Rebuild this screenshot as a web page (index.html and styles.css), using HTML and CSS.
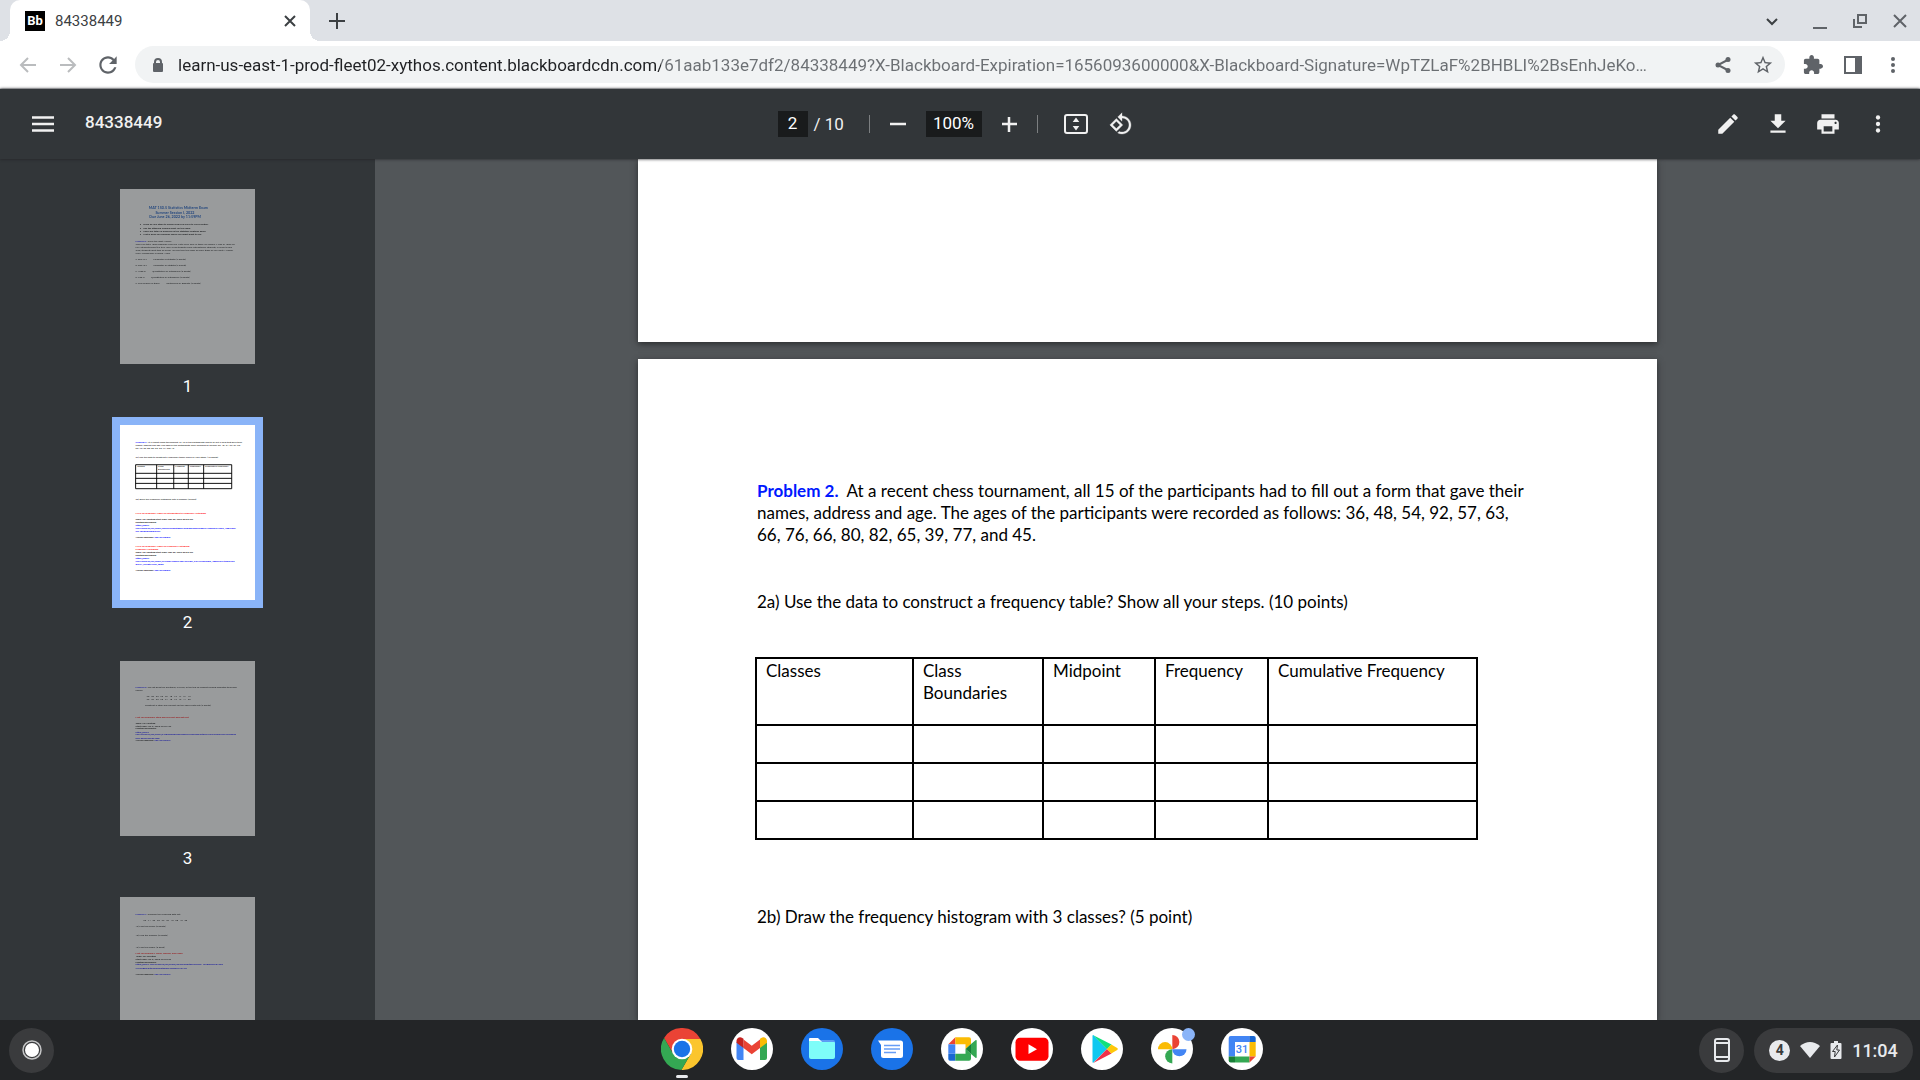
FILE: index.html
```
<!DOCTYPE html>
<html lang="en">
<head>
    <meta charset="UTF-8">
    <meta name="viewport" content="width=device-width, initial-scale=1.0">
    <title>84338449</title>
    <link rel="stylesheet" href="styles.css">
</head>
<body>
    <!-- Tab strip -->
    <div class="tabstrip">
        <div class="tab">
            <span class="favicon">Bb</span>
            <span class="tab-title">84338449</span>
            <button class="tab-close" aria-label="Close tab"><svg width="20" height="20" viewBox="0 0 20 20"><path d="M5 5l10 10M15 5L5 15" stroke="#3c4043" stroke-width="2"/></svg></button>
        </div>
        <button class="new-tab" aria-label="New tab"><svg width="20" height="20" viewBox="0 0 20 20"><path d="M10 2v16M2 10h16" stroke="#3c4043" stroke-width="2"/></svg></button>
        <div class="window-buttons">
            <button aria-label="Search tabs"><svg width="20" height="20" viewBox="0 0 20 20"><path d="M5 8l5 5 5-5" fill="none" stroke="#3c4043" stroke-width="2"/></svg></button>
            <button aria-label="Minimize"><svg width="20" height="20" viewBox="0 0 20 20"><path d="M3 17h14" stroke="#5f6368" stroke-width="2"/></svg></button>
            <button aria-label="Restore"><svg width="20" height="20" viewBox="0 0 20 20"><path d="M8 4h8v8H8zM4 8v8h8" fill="none" stroke="#5f6368" stroke-width="2"/></svg></button>
            <button aria-label="Close window"><svg width="20" height="20" viewBox="0 0 20 20"><path d="M4 4l12 12M16 4L4 16" stroke="#5f6368" stroke-width="2"/></svg></button>
        </div>
    </div>

    <!-- Address bar -->
    <div class="navbar">
        <button class="nav-button" aria-label="Back"><svg width="20" height="20" viewBox="0 0 20 20"><path d="M18 10H3M10 3l-7 7 7 7" fill="none" stroke="#babcbe" stroke-width="2"/></svg></button>
        <button class="nav-button" aria-label="Forward"><svg width="20" height="20" viewBox="0 0 20 20"><path d="M2 10h15M10 3l7 7-7 7" fill="none" stroke="#babcbe" stroke-width="2"/></svg></button>
        <button class="nav-button" aria-label="Reload"><svg width="26" height="26" viewBox="0 0 24 24"><path fill="#5f6368" d="M17.65 6.35C16.2 4.9 14.21 4 12 4c-4.42 0-7.99 3.58-7.99 8s3.57 8 7.99 8c3.73 0 6.84-2.55 7.73-6h-2.08c-.82 2.33-3.04 4-5.65 4-3.31 0-6-2.69-6-6s2.69-6 6-6c1.66 0 3.14.69 4.22 1.78L13 11h7V4l-2.35 2.35z"/></svg></button>
        <div class="omnibox">
            <svg width="16" height="16" viewBox="0 0 16 16"><path d="M5 7V5a3 3 0 0 1 6 0v2" fill="none" stroke="#5f6368" stroke-width="2"/><rect x="3" y="6" width="10" height="9" rx="1" fill="#5f6368"/></svg>
            <input class="url" type="text" aria-label="Address" value="learn-us-east-1-prod-fleet02-xythos.content.blackboardcdn.com/61aab133e7df2/84338449?X-Blackboard-Expiration=1656093600000&amp;X-Blackboard-Signature=WpTZLaF%2BHBLI%2BsEnhJeKo…">
            <button class="nav-button" aria-label="Share"><svg width="20" height="20" viewBox="0 0 20 20"><path d="M15.500 4.500L5 10l10.500 5.500" fill="none" stroke="#5f6368" stroke-width="2"/><circle cx="15" cy="4.500" r="2.500" fill="#5f6368"/><circle cx="5" cy="10" r="2.500" fill="#5f6368"/><circle cx="15" cy="15.500" r="2.500" fill="#5f6368"/></svg></button>
            <button class="nav-button" aria-label="Bookmark"><svg width="22" height="22" viewBox="0 0 24 24"><path fill="#5f6368" d="M22 9.240l-7.190-.62L12 2 9.190 8.630 2 9.240l5.460 4.730L5.820 21 12 17.270 18.180 21l-1.630-7.030L22 9.240zM12 15.400l-3.760 2.270 1-4.280-3.320-2.880 4.380-.38L12 6.100l1.710 4.040 4.380.38-3.320 2.880 1 4.280L12 15.400z"/></svg></button>
        </div>
        <button class="nav-button" aria-label="Extensions"><svg width="20" height="20" viewBox="1 1 22 22"><path fill="#5f6368" d="M20.500 11H19V7c0-1.100-.9-2-2-2h-4V3.500C13 2.120 11.880 1 10.500 1S8 2.120 8 3.500V5H4c-1.100 0-1.990.9-1.990 2v3.800H3.500c1.490 0 2.700 1.210 2.700 2.700s-1.210 2.700-2.700 2.700H2V20c0 1.100.9 2 2 2h3.800v-1.500c0-1.490 1.210-2.700 2.700-2.700 1.490 0 2.700 1.210 2.700 2.700V22H17c1.100 0 2-.9 2-2v-4h1.500c1.380 0 2.500-1.120 2.500-2.500S21.880 11 20.500 11z"/></svg></button>
        <button class="nav-button" aria-label="Side panel"><svg width="18" height="18" viewBox="0 0 18 18"><path fill="#5f6368" fill-rule="evenodd" d="M0 0h18v18H0zM2 2v14h9V2z"/></svg></button>
        <button class="nav-button" aria-label="Browser menu"><svg width="20" height="20" viewBox="0 0 20 20" fill="#5f6368"><circle cx="10" cy="4" r="2"/><circle cx="10" cy="10" r="2"/><circle cx="10" cy="16" r="2"/></svg></button>
    </div>

    <!-- PDF toolbar -->
    <div class="pdf-toolbar">
        <div class="toolbar-start">
            <button class="pdf-button" aria-label="Toggle sidebar"><svg width="22" height="16" viewBox="0 0 22 16"><path d="M0 1.500h22M0 8h22M0 14.500h22" stroke="#f1f1f1" stroke-width="2.500"/></svg></button>
            <span class="doc-name">84338449</span>
        </div>
        <div class="toolbar-center">
            <input class="field page-field" type="text" aria-label="Page number" value="2">
            <span class="page-count">/ 10</span>
            <span class="divider"></span>
            <button class="pdf-button" aria-label="Zoom out"><svg width="18" height="18" viewBox="0 0 18 18"><path d="M1 9h16" stroke="#f1f1f1" stroke-width="2.500"/></svg></button>
            <input class="field zoom-field" type="text" aria-label="Zoom level" value="100%">
            <button class="pdf-button" aria-label="Zoom in"><svg width="18" height="18" viewBox="0 0 18 18"><path d="M2 9h15M9 2v15" stroke="#f1f1f1" stroke-width="2.500"/></svg></button>
            <span class="divider"></span>
            <button class="pdf-button fit" aria-label="Fit to page"><svg width="24" height="20" viewBox="0 0 24 20"><rect x="1" y="1" width="22" height="18" rx="2" fill="none" stroke="#f1f1f1" stroke-width="2"/><path d="M12 3.500l3.300 4.500H8.700zM12 16.500l3.300-4.500H8.700z" fill="#f1f1f1"/></svg></button>
            <button class="pdf-button" aria-label="Rotate"><svg width="24" height="24" viewBox="0 0 24 24"><path fill="#f1f1f1" stroke="#f1f1f1" stroke-width=".3" d="M7.340 6.410L.86 12.900l6.490 6.480 6.490-6.480-6.500-6.490zM3.690 12.900l3.660-3.660L11 12.900l-3.660 3.660-3.650-3.660zm15.670-6.260C17.610 4.880 15.300 4 13 4V.76L8.760 5 13 9.240V6c1.790 0 3.580.68 4.950 2.050 2.730 2.730 2.730 7.170 0 9.900C16.580 19.320 14.790 20 13 20c-.97 0-1.940-.21-2.840-.61l-1.490 1.490C10.020 21.620 11.510 22 13 22c2.300 0 4.610-.88 6.360-2.640 3.520-3.510 3.520-9.210 0-12.720z"/></svg></button>
        </div>
        <div class="toolbar-end">
            <button class="pdf-button" aria-label="Annotate"><svg width="26" height="26" viewBox="0 0 24 24"><path fill="#f1f1f1" d="M3 17.250V21h3.750L17.810 9.940l-3.750-3.750L3 17.250zM20.710 7.040c.39-.39.39-1.020 0-1.410l-2.340-2.340c-.39-.39-1.020-.39-1.410 0l-1.830 1.830 3.750 3.750 1.830-1.830z"/></svg></button>
            <button class="pdf-button" aria-label="Download"><svg width="26" height="26" viewBox="0 0 24 24"><path fill="#f1f1f1" d="M19 9h-4V3H9v6H5l7 7 7-7zM5 18v2h14v-2H5z"/></svg></button>
            <button class="pdf-button" aria-label="Print"><svg width="26" height="26" viewBox="0 0 24 24"><path fill="#f1f1f1" d="M19 8H5c-1.660 0-3 1.340-3 3v6h4v4h12v-4h4v-6c0-1.660-1.340-3-3-3zm-3 11H8v-5h8v5zm3-7c-.55 0-1-.45-1-1s.45-1 1-1 1 .45 1 1-.45 1-1 1zm-1-9H6v4h12V3z"/></svg></button>
            <button class="pdf-button" aria-label="More actions"><svg width="26" height="26" viewBox="0 0 24 24" fill="#f1f1f1"><circle cx="12" cy="6" r="2"/><circle cx="12" cy="12" r="2"/><circle cx="12" cy="18" r="2"/></svg></button>
        </div>
    </div>

    <div class="main">
        <!-- Thumbnails -->
        <div class="sidebar">
            <div class="thumb">
                <svg class="thumb-page" viewBox="0 0 1020 1322">
                    <g class="thumb-title">
                        <text x="441" y="150">MAT 150.5 Statistics Midterm Exam</text>
                        <text x="415" y="188">Summer Session I, 2022</text>
                        <text x="417" y="218">Due June 26, 2022 by 11:59PM</text>
                    </g>
                    <g class="bold">
                        <text x="150" y="273">•</text><text x="176" y="273">Show all your steps to explain how you arrive to your solution.</text>
                        <text x="150" y="303">•</text><text x="176" y="303">Use the attached formula sheet for the exam.</text>
                        <text x="150" y="326">•</text><text x="176" y="326">There are total 10 problems in the Statistics Midterm Exam.</text>
                        <text x="150" y="349">•</text><text x="176" y="349">Hint is given for problems which you might want to use.</text>
                    </g>
                    <text x="118" y="399"><tspan class="blue bold">Problem 1.</tspan> Circle the right Answer.</text>
                    <text x="118" y="422">There are total 1500 problems in BMCC Math Club. 60% of these are female. Mean of 1500 are</text>
                    <text x="118" y="444">Full. Students doesn’t is true. 30% of 50 students were international students, in order to join</text>
                    <text x="118" y="469">Club, students must take an exam. You can take the exam as many times as you want. Number</text>
                    <text x="118" y="492">every Wednesday in Room N700.</text>
                    <text x="118" y="537">a. 60% is a _____ Parameter or Statistic (2 points)</text>
                    <text x="118" y="583">b. 30% is a _____ Parameter or Statistic (2 points)</text>
                    <text x="118" y="628">c. 1500 is _____ Quantitative or Categorical (2 points)</text>
                    <text x="118" y="674">d. 700 is _____ Quantitative or Categorical (2 points)</text>
                    <text x="118" y="719">e. The number of times _____ Continuous or Discrete (2 points)</text>
                </svg>
                <span class="thumb-label">1</span>
            </div>
            <div class="thumb selected">
                <svg class="thumb-page" viewBox="0 0 1020 1322">
                    <text x="118" y="134"><tspan class="blue bold">Problem 2.</tspan>  At a recent chess tournament, all 15 of the participants had to fill out a form that gave their</text>
                    <text x="118" y="157">names, address and age. The ages of the participants were recorded as follows: 36, 48, 54, 92, 57, 63,</text>
                    <text x="118" y="182">66, 76, 66, 80, 82, 65, 39, 77, and 45.</text>
                    <text x="118" y="250">2a) Use the data to construct a frequency table? Show all your steps. (10 points)</text>
                    <path d="M118 300h726v181H118zM277 300v181M406 300v181M516 300v181M632 300v181M118 365h726M118 403h726M118 441h726" fill="none" stroke="#000" stroke-width="7"/>
                    <text x="130" y="319">Classes</text>
                    <text x="288" y="319">Class</text>
                    <text x="288" y="341">Boundaries</text>
                    <text x="417" y="319">Midpoint</text>
                    <text x="527" y="319">Frequency</text>
                    <text x="643" y="319">Cumulative Frequency</text>
                    <text x="118" y="565">2b) Draw the frequency histogram with 3 classes? (5 point)</text>
                    <text class="red bold" x="118" y="673">HINT for problem2: Video on Introduction to Frequency Histogram</text>
                    <g class="bold">
                        <text x="118" y="716">Topic: My Meeting Start Time: Mar 30, 2022 09:53 PM</text>
                        <text x="118" y="741">Meeting Recording:</text>
                        <text class="blue" x="118" y="764">https://bmcc-</text>
                        <text class="blue" x="118" y="787">cuny.zoom.us/rec/share/QR7TfO2B5btwpvFOUDwsFszbeIrngq2I7AQ8TsQZHvqx2_Vq8W6kP</text>
                        <text class="blue" x="118" y="810">hkj.4dTBewxnDwQvuV</text>
                        <text x="118" y="852">Access Passcode: <tspan class="blue">ewN37Wwwo!</tspan></text>
                        <text class="red" x="118" y="923">HINT for problem2: Video on Frequency Histogram</text>
                        <text class="red" x="118" y="946">Frequency Histogram</text>
                        <text x="118" y="968">Topic: My Meeting Start Time: Mar 30, 2022 09:53 PM</text>
                        <text x="118" y="991">Meeting Recording:</text>
                        <text class="blue" x="118" y="1014">https://bmcc-</text>
                        <text class="blue" x="118" y="1036">cuny.zoom.us/rec/share/oyWbmHXqgMHaRV2sCFBE_zYqAWS5hsrwD_7RDkvO5VtTRIEWzs</text>
                        <text class="blue" x="118" y="1059">woVN_xC2wtVWz5_iwRSI</text>
                        <text x="118" y="1104">Access Passcode: <tspan class="blue">ewN37Wwwo!</tspan></text>
                    </g>
                </svg>
                <span class="thumb-label">2</span>
            </div>
            <div class="thumb">
                <svg class="thumb-page" viewBox="0 0 1020 1322">
                    <text x="118" y="205"><tspan class="blue bold">Problem 3.</tspan> The list gives the durations, in years, of the top 20 longest running animated television</text>
                    <text x="118" y="228">shows:</text>
                    <text class="numbers" x="201" y="270">20   33   23   26   22   18   15   17   24   19</text>
                    <text class="numbers" x="201" y="293">25   25   23   23   24   18   16   19   14   20</text>
                    <text x="189" y="341">Construct a stem and leaf plot for the above data set? (5 points)</text>
                    <text class="red bold" x="118" y="432">Hint for problem3: Stem and Leaf plot and dot plot</text>
                    <g class="bold">
                        <text x="118" y="477">Topic: My Meeting</text>
                        <text x="118" y="497">Start Time: Apr 5, 2022 12:43 AM</text>
                        <text x="118" y="515">Meeting Recording:</text>
                        <text class="blue" x="118" y="545">https://bmcc-</text>
                        <text class="blue" x="118" y="560">cuny.zoom.us/rec/share/iFOBDBzM8sCxTbvpTqJvlz2s5GRB3KtzGj5VQruOGpIxUM6yvSpxBTo</text>
                        <text class="blue" x="118" y="588">duvr.8zpSLOSpwNBBjl</text>
                        <text x="118" y="606">Access Passcode: <tspan class="blue">ewN37Wwwo!</tspan></text>
                    </g>
                </svg>
                <span class="thumb-label">3</span>
            </div>
            <div class="thumb">
                <svg class="thumb-page" viewBox="0 0 1020 1322">
                    <text x="118" y="134"><tspan class="blue bold">Problem 4.</tspan> Consider the following data set:</text>
                    <text class="numbers" x="176" y="182">20   74   32   35   22   25   40   38   43   33</text>
                    <text x="118" y="228">4a) Find the mean? (5 points)</text>
                    <text x="118" y="296">4b) Find the median? (5 points)</text>
                    <text x="118" y="386">4c) Find the mode? (5 point)</text>
                    <g class="bold">
                        <text class="red" x="118" y="432">Hint for problem4: Mean, Median, and Mode</text>
                        <text x="122" y="452">Topic: My Meeting</text>
                        <text x="118" y="477">Start Time: Apr 5, 2022 12:43 PM</text>
                        <text x="118" y="500">Meeting Recording:</text>
                        <text class="blue" x="118" y="515">https://bmcc-cuny.zoom.us/rec/share/ZBOMQBErtgsvOTxT3P_JeCBfdiMpygAkDe</text>
                        <text class="blue" x="118" y="545">WGCd8qxcwtwOBB5ZwtdBExrCwwKoZHxAFO</text>
                        <text x="118" y="590">Access Passcode: <tspan class="blue">ewN37Wwwo!</tspan></text>
                    </g>
                </svg>
            </div>
        </div>

        <!-- Document -->
        <div class="viewer">
            <div class="page page-end"></div>
            <div class="page">
                <p class="problem"><b>Problem 2.</b>&nbsp; At a recent chess tournament, all 15 of the participants had to fill out a form that gave their<br>names, address and age. The ages of the participants were recorded as follows: 36, 48, 54, 92, 57, 63,<br>66, 76, 66, 80, 82, 65, 39, 77, and 45.</p>
                <p>2a) Use the data to construct a frequency table? Show all your steps. (10 points)</p>
                <table>
                    <colgroup><col class="col-classes"><col class="col-bounds"><col class="col-mid"><col class="col-freq"><col class="col-cumul"></colgroup>
                    <thead>
                        <tr><th>Classes</th><th>Class<br>Boundaries</th><th>Midpoint</th><th>Frequency</th><th>Cumulative Frequency</th></tr>
                    </thead>
                    <tbody>
                        <tr><td></td><td></td><td></td><td></td><td></td></tr>
                        <tr><td></td><td></td><td></td><td></td><td></td></tr>
                        <tr><td></td><td></td><td></td><td></td><td></td></tr>
                    </tbody>
                </table>
                <p>2b) Draw the frequency histogram with 3 classes? (5 point)</p>
            </div>
        </div>
    </div>

    <!-- Shelf -->
    <div class="shelf">
        <div class="shelf-start">
            <button class="launcher" aria-label="Launcher"><svg width="22" height="22" viewBox="0 0 22 22"><circle cx="11" cy="11" r="9" fill="none" stroke="#c4c5c6" stroke-width="1.500"/><circle cx="11" cy="11" r="7" fill="#fff"/></svg></button>
        </div>
        <div class="apps">
            <button class="app running" aria-label="Chrome"><svg viewBox="3 3 42 42">
                <path fill="#ea4335" d="M6.100 13A21 21 0 0 1 42.470 14H24L15.340 29z"/>
                <path fill="#fbc52d" d="M42.470 14A21 21 0 0 1 23.400 45L32.660 29 24 14z"/>
                <path fill="#34a853" d="M23.400 45A21 21 0 0 1 6.100 13L15.340 29H32.660z"/>
                <circle cx="24" cy="24" r="10.300" fill="#fff"/><circle cx="24" cy="24" r="8.200" fill="#1a73e8"/>
            </svg></button>
            <button class="app" aria-label="Gmail"><svg viewBox="0 0 42 42">
                <circle cx="21" cy="21" r="21" fill="#fff"/>
                <path fill="#4285f4" d="M5.500 14v16a2 2 0 0 0 2 2h5V18z"/>
                <path fill="#34a853" d="M36 14v16a2 2 0 0 1-2 2h-5V18z"/>
                <path fill="#ea4335" d="M12.500 11.500l8.250 6.200 8.250-6.200V20l-8.250 6.200L12.500 20z"/>
                <path fill="#c5221f" d="M5.500 12.800c0-3 3.400-4.700 5.800-2.900l1.200.9V20l-7-5.200z"/>
                <path fill="#fbbc04" d="M36 12.800c0-3-3.400-4.700-5.800-2.900l-1.200.9V20l7-5.200z"/>
            </svg></button>
            <button class="app" aria-label="Files"><svg viewBox="0 0 42 42">
                <circle cx="21" cy="21" r="21" fill="#1a73e8"/>
                <path fill="#5c9df5" d="M18 12h14a2 2 0 0 1 2 2v4H18z"/>
                <path fill="#fff" d="M8 15v-4a1 1 0 0 1 1-1h8l4 4v3H8z"/>
                <path fill="#7efdf9" d="M8 13h10l3 1h12a1 1 0 0 1 1 1v14a2 2 0 0 1-2 2H10a2 2 0 0 1-2-2z"/>
            </svg></button>
            <button class="app" aria-label="Messages"><svg viewBox="0 0 42 42">
                <circle cx="21" cy="21" r="21" fill="#1a73e8"/>
                <path fill="#fff" d="M7 12.500h22.500a2.500 2.500 0 0 1 2.500 2.500v12.500a2.500 2.500 0 0 1-2.500 2.500h-17a2.500 2.500 0 0 1-2.500-2.500V17z"/>
                <path stroke="#669df6" stroke-width="1.500" d="M13 17.500h16M13 21h16M13 24.500h12"/>
            </svg></button>
            <button class="app" aria-label="Meet"><svg viewBox="0 0 42 42">
                <circle cx="21" cy="21" r="21" fill="#fff"/>
                <path fill="#ea4335" d="M7.300 16.300l7-7v7z"/>
                <path fill="#4285f4" d="M7.300 16.300h7v9.400h-7z"/>
                <path fill="#1967d2" d="M7.300 25.700h7v7H9a1.700 1.700 0 0 1-1.700-1.700z"/>
                <path fill="#fbbc04" d="M14.300 9.300H28a2 2 0 0 1 2 2V16l-5.500 5v-4.700H14.300z"/>
                <path fill="#34a853" d="M14.300 25.700h10.200V21l5.500 5v4.700a2 2 0 0 1-2 2H14.300zM30 16l4.500-3.700c.7-.5 1.200-.2 1.200.5v16.400c0 .7-.5 1-1.200.5L30 26z"/>
                <path fill="#188038" d="M24.500 21l5.500-5v10z"/>
            </svg></button>
            <button class="app" aria-label="YouTube"><svg viewBox="0 0 42 42">
                <circle cx="21" cy="21" r="21" fill="#fff"/>
                <rect x="4.500" y="9.800" width="33" height="23" rx="4.500" fill="red"/>
                <path fill="#fff" d="M17.500 16.300v9.800l8.500-4.900z"/>
            </svg></button>
            <button class="app" aria-label="Play Store"><svg viewBox="0 0 42 42">
                <circle cx="21" cy="21" r="21" fill="#fff"/>
                <path fill="#10c8f0" d="M11.500 8v26c0 .8.500 1 1 .6L26 21 12.500 7.300c-.5-.4-1-.1-1 .7z"/>
                <path fill="#10e07c" d="M12.300 7.200L30.500 16.500 26 21.200z"/>
                <path fill="#f2304a" d="M12.300 34.900L30.500 25.500 26 21z"/>
                <path fill="#fec70a" d="M30.300 16.400l5.900 3.700c.8.500.8 1.300 0 1.800l-5.900 3.700L26 21z"/>
            </svg></button>
            <button class="app notified" aria-label="Photos"><svg viewBox="0 0 42 42">
                <circle cx="21" cy="21" r="21" fill="#fff"/>
                <path fill="#ea4335" d="M21.300 7a7.100 7.100 0 0 1 0 14.200z"/>
                <path fill="#fbbc04" d="M7 21.200a7.100 7.100 0 0 1 14.200 0z"/>
                <path fill="#34a853" d="M21.300 21.200v14.200a7.100 7.100 0 0 1 0-14.200z"/>
                <path fill="#4285f4" d="M21.300 21.200h14.200a7.100 7.100 0 0 1-14.200 0z"/>
            </svg></button>
            <button class="app" aria-label="Calendar"><svg viewBox="0 0 42 42">
                <circle cx="21" cy="21" r="21" fill="#fff"/>
                <path fill="#4285f4" d="M7.700 10a2 2 0 0 1 2-2h19v6H14v14.500H7.700z"/>
                <path fill="#1967d2" d="M28.500 8h4.200a2 2 0 0 1 2 2v4h-6.200z"/>
                <path fill="#fbbc04" d="M28.500 14h6.200v14.500h-6.200z"/>
                <path fill="#34a853" d="M14 28.500h14.500v6H14z"/>
                <path fill="#188038" d="M7.700 28.500H14v6H9.700a2 2 0 0 1-2-2z"/>
                <path fill="#ea4335" d="M28.500 28.500h6.200l-6.200 6z"/>
                <text class="calendar-day" x="21" y="25">31</text>
            </svg></button>
        </div>
        <div class="shelf-end">
            <button class="phone" aria-label="Phone hub"><svg width="16" height="24" viewBox="0 0 16 24"><rect x="1" y="1" width="14" height="22" rx="2" fill="none" stroke="#e8eaed" stroke-width="2"/><path d="M1 5h14M1 19h14" stroke="#e8eaed" stroke-width="2"/></svg></button>
            <button class="status" aria-label="Status tray">
                <span class="count">4</span>
                <svg width="20" height="16" viewBox="0 0 20 16"><path d="M0 4Q10-4 20 4L10 16z" fill="#e8eaed"/></svg>
                <svg width="12" height="18" viewBox="0 0 12 18"><path fill="#e8eaed" d="M4 0h4v2h2.500a1 1 0 0 1 1 1v14a1 1 0 0 1-1 1h-9a1 1 0 0 1-1-1V3a1 1 0 0 1 1-1H4z"/><path fill="#e8eaed" stroke="#3a3b3d" d="M7.500 4L2.500 10.500h2.700L4.500 16l5-7H6.800z"/></svg>
                <span class="clock">11:04</span>
            </button>
        </div>
    </div>
</body>
</html>
```
FILE: styles.css
```
* {
    box-sizing: border-box;
}
body {
    margin: 0;
    height: 100vh;
    display: flex;
    flex-direction: column;
    overflow: hidden;
    font-family: Roboto, sans-serif;
    background: #525659;
}
button {
    display: flex;
    align-items: center;
    justify-content: center;
    padding: 0;
    border: 0;
    background: none;
    font-family: inherit;
}
svg {
    display: block;
    flex: none;
}

/* tab strip */
.tabstrip {
    display: flex;
    align-items: center;
    height: 41px;
    flex: none;
    padding-left: 10px;
    background: #dee1e6;
}
.tab {
    position: relative;
    display: flex;
    align-items: center;
    width: 300px;
    height: 41px;
    padding: 0 10px 0 15px;
    background: #fff;
    border-radius: 10px 10px 0 0;
}
.tab::before,
.tab::after {
    content: "";
    position: absolute;
    bottom: 0;
    left: -10px;
    width: 10px;
    height: 10px;
    background: radial-gradient(circle at 0 0, #dee1e6 10px, #fff 10px);
}
.tab::after {
    left: 100%;
    background: radial-gradient(circle at 100% 0, #dee1e6 10px, #fff 10px);
}
.favicon {
    width: 20px;
    height: 20px;
    margin-right: 10px;
    background: #000;
    color: #fff;
    font-size: 13px;
    font-weight: bold;
    line-height: 20px;
    text-align: center;
}
.tab-title {
    flex: 1;
    font-size: 15px;
    color: #3c4043;
}
.new-tab {
    margin-left: 17px;
}
.window-buttons {
    display: flex;
    gap: 20px;
    margin-left: auto;
    padding-right: 10px;
}
.window-buttons button:first-child {
    margin-right: 8px;
}

/* address bar */
.navbar {
    display: flex;
    align-items: center;
    height: 48px;
    flex: none;
    padding: 0 7px 0 8px;
    background: #fff;
    border-bottom: 1px solid #d5d7da;
}
.nav-button {
    width: 40px;
    height: 36px;
    flex: none;
}
.omnibox {
    display: flex;
    align-items: center;
    flex: 1;
    height: 37px;
    margin: 0 8px 0 7px;
    padding: 0 2px 0 15px;
    border-radius: 19px;
    background: #f1f3f4;
}
.url {
    flex: 1;
    min-width: 0;
    margin-left: 12px;
    padding: 0;
    border: 0;
    outline: 0;
    font-family: inherit;
    font-size: 17px;
    line-height: 24px;
    color: #5f6368;
    /* host part is darker than the path */
    background: linear-gradient(90deg, #202124 483px, #6b6f73 483px);
    -webkit-background-clip: text;
    background-clip: text;
    -webkit-text-fill-color: transparent;
}

/* pdf toolbar */
.pdf-toolbar {
    display: flex;
    align-items: center;
    height: 70px;
    flex: none;
    background: #323639;
    color: #f1f1f1;
    box-shadow: 0 0 3px #202124;
    z-index: 1;
}
.toolbar-start,
.toolbar-end {
    display: flex;
    align-items: center;
    flex: 1;
}
.toolbar-start {
    padding-left: 23px;
}
.toolbar-end {
    justify-content: flex-end;
    gap: 10px;
    padding-right: 22px;
}
.toolbar-center {
    display: flex;
    align-items: center;
    padding-right: 3px;
}
.pdf-button {
    width: 40px;
    height: 40px;
}
.doc-name {
    margin-left: 22px;
    padding-bottom: 4px;
    font-size: 17px;
    font-weight: 500;
}
.field {
    height: 26px;
    padding: 0 0 2px;
    border: 0;
    background: #191b1c;
    color: #fff;
    font-family: inherit;
    font-size: 17px;
    text-align: center;
}
.page-field {
    width: 30px;
}
.zoom-field {
    width: 56px;
    margin: 0 7px 0 8px;
}
.page-count {
    width: 30px;
    margin: 0 25px 0 6px;
    font-size: 17px;
    white-space: nowrap;
}
.divider {
    width: 1px;
    height: 18px;
    margin-right: 8px;
    background: #7c7f81;
}
.pdf-button + .divider {
    margin-left: 8px;
}
.fit {
    margin: 0 5px 0 10px;
}

/* sidebar */
.main {
    display: flex;
    flex: 1;
    min-height: 0;
}
.sidebar {
    width: 375px;
    flex: none;
    padding-top: 22px;
    background: #323639;
    overflow: hidden;
}
.thumb {
    display: flex;
    flex-direction: column;
    align-items: center;
    height: 236px;
}
.thumb-page {
    box-sizing: content-box;
    width: 135px;
    height: 175px;
    border: 8px solid transparent;
    background: #fff;
    background-clip: padding-box;
    opacity: 0.5;
    font-family: Lato, sans-serif;
    font-size: 18px;
}
.selected .thumb-page {
    border-color: #8ab4f8;
    opacity: 1;
}
.thumb-label {
    margin-top: 4px;
    font-size: 17px;
    line-height: 20px;
    color: #fff;
}
.thumb-title {
    font-size: 28px;
    font-weight: bold;
    text-anchor: middle;
    fill: #1f5fc4;
}
.bold {
    font-weight: bold;
}
.blue {
    fill: #0000ff;
}
.red {
    fill: #ff0000;
}
.numbers {
    white-space: pre;
}

/* document */
.viewer {
    display: flex;
    flex-direction: column;
    align-items: center;
    flex: 1;
    min-width: 0;
    gap: 17px;
    overflow: hidden;
    background: #525659;
}
.page {
    width: 1019px;
    flex: 1;
    min-height: 0;
    padding: 121px 119px 0;
    background: #fff;
    box-shadow: 0 2px 6px #2b2d2f;
    font-family: Lato, sans-serif;
    font-size: 17px;
    line-height: 22px;
    color: #000;
}
.page-end {
    flex: none;
    height: 183px;
    padding: 0;
}
.page p {
    margin: 0;
    white-space: nowrap;
}
.page .problem {
    margin-bottom: 45px;
}
.problem b {
    color: #0018ff;
}
table {
    width: 722px;
    margin: 44px 0 66px -2px;
    border-collapse: collapse;
    table-layout: fixed;
}
th,
td {
    height: 38px;
    padding: 1px 10px 0 9px;
    border: 2px solid #000;
    font-weight: normal;
    text-align: left;
    vertical-align: top;
}
th {
    height: 67px;
}
.col-classes { width: 157px; }
.col-bounds { width: 130px; }
.col-mid { width: 112px; }
.col-freq { width: 113px; }
.col-cumul { width: 209px; }

/* shelf */
.shelf {
    display: flex;
    align-items: center;
    height: 60px;
    flex: none;
    padding: 0 7px 0 9px;
    background: #232527;
    z-index: 1;
}
.shelf-start,
.shelf-end {
    display: flex;
    flex: 1;
}
.shelf-end {
    justify-content: flex-end;
    gap: 10px;
}
.launcher,
.phone {
    width: 45px;
    height: 45px;
    border-radius: 50%;
    background: #3a3b3d;
}
.apps {
    display: flex;
    gap: 28px;
    padding: 0 0 2px 2px;
}
.app {
    position: relative;
    width: 42px;
    height: 42px;
}
.app svg {
    width: 42px;
    height: 42px;
}
.running::after {
    content: "";
    position: absolute;
    left: 15px;
    bottom: -8px;
    width: 12px;
    height: 3px;
    border-radius: 2px;
    background: #e8eaed;
}
.notified::after {
    content: "";
    position: absolute;
    top: 0;
    right: -2px;
    width: 13px;
    height: 13px;
    border-radius: 50%;
    background: #8ab4f8;
}
.calendar-day {
    font-size: 11px;
    font-weight: 500;
    text-anchor: middle;
    fill: #4285f4;
}
.status {
    gap: 10px;
    width: 159px;
    height: 45px;
    border-radius: 23px;
    background: #3a3b3d;
    color: #e8eaed;
}
.count {
    width: 21px;
    height: 21px;
    border-radius: 50%;
    background: #e8eaed;
    color: #3a3b3d;
    font-size: 14px;
    font-weight: bold;
    line-height: 21px;
}
.clock {
    font-size: 18px;
    font-weight: 500;
}
```
